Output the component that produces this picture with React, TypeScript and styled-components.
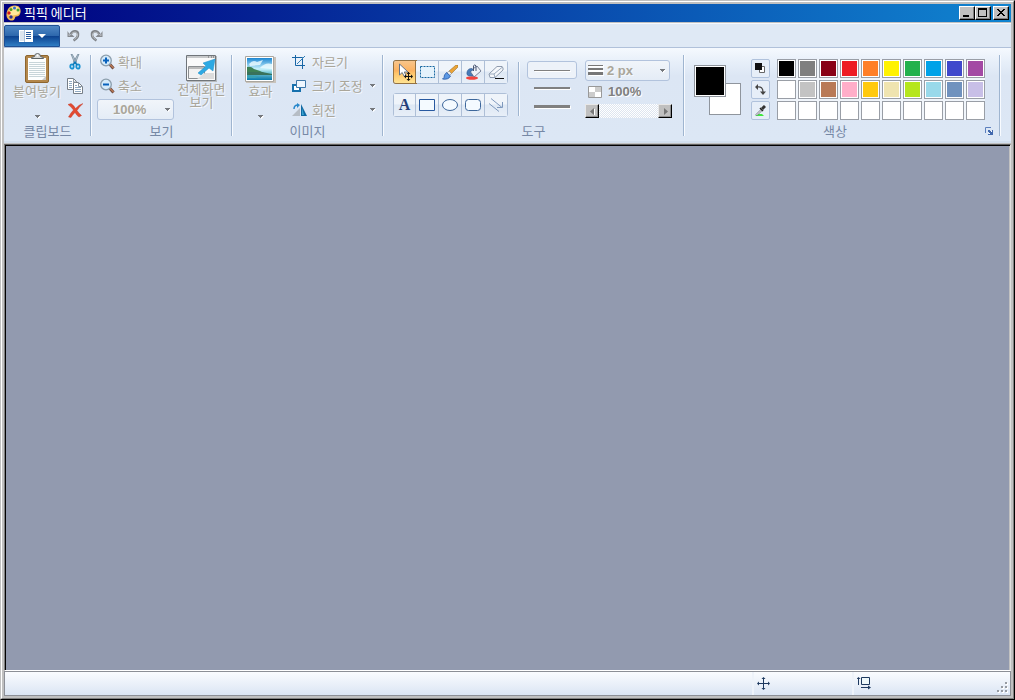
import React from "react";
import styled, { createGlobalStyle, css } from "styled-components";

const Global = createGlobalStyle`
  * { box-sizing: border-box; }
  body { margin: 0; font-family: "Noto Sans CJK KR", sans-serif; font-size: 13px; line-height: 16px; background: #c0c0c0; }
  button, select, input { font: inherit; margin: 0; padding: 0; border: 0; background: none; border-radius: 0; color: inherit; }
  svg { display: block; flex: none; }
`;

const OuterFrame = styled.div`
  min-height: 100vh;
  display: flex;
  border: 1px solid;
  border-color: #c0c0c0 #000 #000 #c0c0c0;
`;
const Frame = styled.div`
  flex: 1;
  min-width: 0;
  display: flex;
  flex-direction: column;
  padding: 2px;
  background: #c0c0c0;
  border: 1px solid;
  border-color: #fff #808080 #808080 #fff;
`;

const TitleBar = styled.header`
  height: 18px;
  display: flex;
  align-items: center;
  gap: 3px;
  padding: 0 2px;
  background: linear-gradient(90deg, #000080, #1084d0);
  color: #fff;
`;
const Title = styled.h1`
  flex: 1;
  margin: 0;
  font-size: 13px;
  line-height: 16px;
  font-weight: 400;
`;
const WindowButtons = styled.div`
  display: flex;
`;
const WindowButton = styled.button<{ $apart?: boolean }>`
  width: 16px;
  height: 14px;
  margin-left: ${(p) => (p.$apart ? 2 : 0)}px;
  background: #c0c0c0;
  border: 1px solid;
  border-color: #fff #000 #000 #fff;
  box-shadow: inset -1px -1px #808080;
`;

const QuickBar = styled.nav`
  height: 25px;
  margin-top: 1px;
  display: flex;
  align-items: center;
  gap: 7px;
  background: #dfe9f5;
  border-top: 1px solid #f6f9fd;
  border-bottom: 1px solid #b0c1da;
`;
const AppMenu = styled.button`
  width: 56px;
  height: 22px;
  display: flex;
  align-items: center;
  justify-content: center;
  gap: 5px;
  border: 1px solid #1e4f94;
  border-radius: 2px 2px 0 0;
  background: linear-gradient(#4f87c4, #2e68ad 48%, #0d4390 52%, #2f7dc3);
`;
const QuickButton = styled.button`
  width: 16px;
  height: 14px;
`;

const Ribbon = styled.section`
  height: 95px;
  display: flex;
  padding: 0 1px;
  background: linear-gradient(#f5f9fe, #e7eff9 14px, #dce6f4 28px, #dce7f5);
  border-bottom: 2px solid #d2dfee;
`;
const Group = styled.section<{ $width: number }>`
  width: ${(p) => p.$width}px;
  flex: none;
  display: flex;
  flex-direction: column;
  padding-top: 4px;
`;
const GroupContent = styled.div<{ $left?: number; $gap?: number }>`
  height: 71px;
  display: flex;
  align-items: flex-start;
  padding-left: ${(p) => p.$left ?? 0}px;
  gap: ${(p) => p.$gap ?? 0}px;
`;
const GroupLabel = styled.h2`
  margin: 0;
  font-size: 13px;
  font-weight: 400;
  line-height: 16px;
  text-align: center;
  color: #7688a5;
`;
const LabelRow = styled.div`
  display: grid;
  grid-template-columns: 1fr 14px;
  align-items: center;
`;
const Separator = styled.div<{ $inner?: boolean }>`
  width: 2px;
  flex: none;
  border-left: 1px solid #9fb5d0;
  background: #f8fbff;
  margin: ${(p) => (p.$inner ? "10px 7px 0 10px" : "7px 0 5px")};
  ${(p) => p.$inner && "height: 54px;"}
`;

const dimText = css`
  color: #aaa69a;
  text-shadow: 1px 1px #f4f8fd;
`;
const LargeButton = styled.button<{ $width: number; $top?: number }>`
  ${dimText}
  width: ${(p) => p.$width}px;
  height: 70px;
  padding-top: ${(p) => p.$top ?? 0}px;
  display: flex;
  flex-direction: column;
  align-items: center;
  line-height: 13px;
  white-space: nowrap;
`;
const LargeArrow = styled.i`
  margin: auto 0 3px;
`;
const SmallColumn = styled.div`
  display: flex;
  flex-direction: column;
  gap: 8px;
  padding-top: 2px;
`;
const IconButton = styled.button`
  width: 16px;
  height: 16px;
  display: grid;
  place-items: center;
`;
const RowButton = styled.button<{ $width?: number }>`
  ${dimText}
  width: ${(p) => (p.$width ? p.$width + "px" : "auto")};
  height: 16px;
  display: flex;
  align-items: center;
  gap: ${(p) => (p.$width ? 5 : 3)}px;
  text-align: left;
  white-space: nowrap;
  span { flex: 1; }
`;
const Combo = styled.label<{ $width: number }>`
  ${dimText}
  width: ${(p) => p.$width}px;
  height: 21px;
  display: flex;
  align-items: center;
  padding: 0 3px 0 2px;
  gap: 3px;
  border: 1px solid #b2c3dd;
  border-radius: 3px;
  background: linear-gradient(#f1f5fa, #e4ecf6);
  font-family: "Liberation Sans", sans-serif;
  font-weight: 700;
  select {
    flex: 1;
    min-width: 0;
    appearance: none;
    outline: 0;
    text-shadow: inherit;
  }
`;
const ZoomCombo = styled(Combo)`
  margin: -3px 0 0 -3px;
  padding: 0 2px 0 15px;
`;

const ToolGrid = styled.div`
  display: flex;
  flex-direction: column;
  gap: 9px;
  padding-top: 8px;
`;
const ToolStrip = styled.div`
  display: flex;
  height: 24px;
  border: 1px solid #aebfd7;
  border-radius: 3px;
`;
const Tool = styled.button<{ $active?: boolean }>`
  width: 23px;
  height: 22px;
  display: grid;
  place-items: center;
  background: linear-gradient(#eff4fa 45%, #dee8f4 50%, #e8eff8);
  border-right: 1px solid #aebfd7;
  &:first-child { width: 22px; }
  &:last-child { width: 22px; border-right: 0; }
  ${(p) =>
    p.$active &&
    css`
      background: linear-gradient(#f8c58b, #fcb260 45%, #ffc46a 55%, #ffe391);
      box-shadow: 0 0 0 1px #947242;
      border-right-color: #947242;
      border-radius: 2px 0 0 2px;
    `}
`;
const StrokeColumn = styled.div`
  width: 50px;
  display: flex;
  flex-direction: column;
  padding-top: 9px;
`;
const StrokeButton = styled.button<{ $weight: number; $active?: boolean }>`
  height: 18px;
  display: grid;
  place-items: center;
  border: 1px solid ${(p) => (p.$active ? "#b2c3dd" : "transparent")};
  background: ${(p) => (p.$active ? "#edf2f9" : "transparent")};
  border-radius: 3px;
  &::after {
    content: "";
    width: 36px;
    height: ${(p) => p.$weight}px;
    background: #808080;
    box-shadow: 1px 1px #fff;
  }
`;
const SizeColumn = styled.div`
  width: 87px;
  margin-left: 8px;
  padding-top: 8px;
`;
const Opacity = styled.label`
  display: flex;
  align-items: center;
  gap: 6px;
  height: 16px;
  margin: 3px 0 4px;
  padding-left: 3px;
  color: #7f7f7f;
  font-family: "Liberation Sans", sans-serif;
  font-weight: 700;
  text-shadow: 1px 1px #fff;
`;
const ScrollTrack = styled.div`
  height: 14px;
  display: flex;
`;
const ScrollButton = styled.button`
  width: 14px;
  height: 14px;
  display: grid;
  place-items: center;
  background: #c0c0c0;
  border: 1px solid;
  border-color: #e8e8e8 #000 #000 #e8e8e8;
  box-shadow: inset -1px -1px #909090;
`;
const ScrollRange = styled.input`
  flex: 1;
  min-width: 0;
  height: 14px;
  appearance: none;
  background: repeating-conic-gradient(#fff 0 25%, #dde5f0 0 50%) 0 0 / 2px 2px;
  &::-webkit-slider-thumb { appearance: none; width: 1px; height: 1px; }
`;

const CurrentColors = styled.div`
  width: 48px;
  height: 50px;
  margin-top: 13px;
  display: grid;
  grid-template: 18px 14px 18px / 15px 17px 15px;
`;
const CurrentColor = styled.button<{ $color: string; $back?: boolean }>`
  grid-area: ${(p) => (p.$back ? "2 / 2 / 4 / 4" : "1 / 1 / 3 / 3")};
  z-index: ${(p) => (p.$back ? 0 : 1)};
  border: 1px solid #8f959d;
  background: ${(p) => p.$color};
  box-shadow: inset 0 0 0 1px #fff;
`;
const ColorTools = styled.div`
  display: flex;
  flex-direction: column;
  gap: 2px;
  margin: 7px 7px 0 9px;
`;
const ColorTool = styled.button`
  width: 19px;
  height: 19px;
  display: grid;
  place-items: center;
  background: #e6eef8;
  border: 1px solid #b0c2dc;
  border-radius: 2px;
`;
const Palette = styled.div`
  display: grid;
  grid-template-columns: repeat(10, 19px);
  gap: 2px;
  margin-top: 7px;
  background: #f0f5fb;
`;
const Swatch = styled.button<{ $color: string }>`
  height: 19px;
  background: ${(p) => p.$color};
  border: 1px solid #999ea6;
  box-shadow: inset 0 0 0 1px #fff;
`;

const Workspace = styled.main`
  flex: 1;
  margin-top: 1px;
  background: #929aaf;
  border: 1px solid;
  border-color: #606060 #dfdfdf #fff #808080;
  box-shadow: inset 1px 1px #000, inset -1px 0 #c0c0c0;
`;
const StatusBar = styled.footer`
  height: 25px;
  display: flex;
  border: 1px solid #8c8f96;
  background: linear-gradient(#fafcff, #dbe5f3);
`;
const StatusCell = styled.div<{ $width?: number }>`
  ${(p) => (p.$width ? `width: ${p.$width}px; border-left: 2px solid #eef3fa;` : "flex: 1;")}
  padding: 5px 3px 0;
`;
const Grip = styled.div`
  display: flex;
  align-items: flex-end;
  padding: 0 2px 2px 0;
`;

const Arrow = () => (
  <svg width="7" height="4" aria-hidden="true"><path d="M2 1h5L4.5 4z" fill="#fff" /><path d="M1 0h5v1H5v1H4v1H3V2H2V1H1z" fill="#75787d" /></svg>
);
const PaletteLogo = () => (
  <svg width="15" height="16" viewBox="0 0 15 16">
    <path d="M8 .5C13 0 15 3 14.6 7c-.5 3-2 4.500-4.600 4.500-1 .2-.8 1.500-1.500 2.500C7.500 16 4 16 2 14c-2-2-2-6-.5-9S5 1 8 .5z" fill="#efb955" />
    <path d="M8 1.500C12.500 1 14 3.500 13.600 7c-.5 2-2 3-4 3-3 .5-5 1-7 .5C2 6 3 2.500 8 1.500z" fill="#ffe79b" />
    <circle cx="5" cy="4.500" r="1.500" fill="#4e9a20" /><circle cx="8.500" cy="3" r="1.500" fill="#2a6fc9" /><circle cx="12" cy="5" r="1.500" fill="#40a535" /><circle cx="3" cy="8" r="1.700" fill="#d71d17" /><circle cx="5" cy="12" r="1.700" fill="#30308e" />
  </svg>
);
const Undo = ({ flip = false }: { flip?: boolean }) => (
  <svg width="13" height="13" viewBox="0 0 13 13"><g transform={flip ? "translate(13 0) scale(-1 1)" : undefined}>
    <path d="M3.500 5.500C6 .5 11.500 1.500 11 6c0 3-2 4-4.500 5.500" fill="none" stroke="#7f8388" strokeWidth="2.500" />
    <path d="M4 5.500C6.500 2 10.500 2.500 10.500 6c0 2-1 3-3 4.500" fill="none" stroke="#bcc0c3" />
    <path d="M.5 2v6h7l-2-2H3z" fill="#85898e" /><path d="M1.500 4.500v2.500h2z" fill="#b6b9bd" />
  </g></svg>
);
const Clipboard = () => (
  <svg width="25" height="31" viewBox="0 0 25 31">
    <rect x=".5" y="2.500" width="23" height="27" rx="1.500" fill="#b3874b" stroke="#8d652f" />
    <path d="M3 5h18v22H3z" fill="#fdfefe" /><path d="M4 9.500h16M4 11.500h16M4 13.500h16M4 15.500h16M4 17.500h16M4 19.500h16M4 21.500h16M4 23.500h16" stroke="#c8d5d9" />
    <path d="M6.500 5.500v-1l3-1q0-3 3-3t3 3l3 1v1z" fill="#d7d9d9" stroke="#5e6467" /><circle cx="12.500" cy="2.500" r="1" fill="#fff" />
    <path d="M17 27l4-4v4z" fill="#c9c9c9" />
  </svg>
);
const Scissors = () => (
  <svg width="12" height="16" viewBox="0 0 12 16"><path d="M2 0l1 0 4.500 8-1.500 2zM10 0H9L4.500 8 6 10z" fill="#bdcbd5" stroke="#677f92" strokeWidth=".7" />
    <ellipse cx="3" cy="12.500" rx="1.700" ry="2.200" fill="none" stroke="#1791d1" strokeWidth="1.800" /><ellipse cx="9" cy="12.500" rx="1.700" ry="2.200" fill="none" stroke="#1791d1" strokeWidth="1.800" /><path d="M4 11l2-3 2 3" stroke="#0b79ba" strokeWidth="1.500" fill="none" /></svg>
);
const Copy = () => (
  <svg width="16" height="17" viewBox="0 0 16 17"><g fill="#fff" stroke="#777f88"><path d="M.5.500h6l3 3v8h-9z" /><path d="M6.500 4.500h5l4 4v7h-9z" /></g>
    <path d="M11.500 5v3.500H15M6.500 1v3H9" fill="none" stroke="#8d98a3" /><path d="M2 3.500h3M2 5.500h3M2 7.500h3M2 9.500h3M8 7.500h2M8 9.500h6M8 11.500h6M8 13.500h6" stroke="#8fa9c2" /></svg>
);
const Delete = () => (
  <svg width="15" height="15" viewBox="0 0 15 15"><path d="M0 1.500L3 .5q2.500 1.500 4.500 5Q11 1.500 15 .5 11 4 9 7.500q2 3 4.500 5L11 14q-2-1-4-4.500-3 3-4 5L.5 14Q2.500 10 5.500 7 3 3.500 0 1.500z" fill="#e24a31" stroke="#bd2d1b" strokeWidth=".4" /></svg>
);
const Magnifier = ({ plus = false }: { plus?: boolean }) => (
  <svg width="15" height="16" viewBox="0 0 15 16"><path d="M10 10.500l3.500 4" stroke="#6b4b42" strokeWidth="3" /><path d="M9.500 10l4 4" stroke="#bd7a55" strokeWidth="1.500" />
    <circle cx="6" cy="6.500" r="5.300" fill="#d4eafa" stroke="#8b9dab" strokeWidth="1.300" /><path d={plus ? "M3 6.500h6M6 3.500v6" : "M3 6.500h6"} stroke="#0862bd" strokeWidth="2" /></svg>
);
const FullScreen = () => (
  <svg width="31" height="27" viewBox="0 0 31 27"><path d="M1 1h30v26H1z" fill="#b7babc" /><path d="M.5.500h29v25H.5z" fill="#fafafa" stroke="#70757a" /><path d="M1 1h28v2H1z" fill="#c7c9cb" /><path d="M22 2h1M25 2h1M27 2h1" stroke="#666" />
    <path d="M2.500 11.500h16v12h-16z" fill="#f2f2f2" stroke="#8b8e91" /><path d="M3 13h15" stroke="#bbb" strokeWidth="2" /><path d="M11 24l8-6h9v6z" fill="#dcdcdc" />
    <path d="M12 18l8-7-3-3 12-4-2 12-4-3-8 7z" fill="#2da9e3" stroke="#1d8dc8" strokeWidth=".5" /></svg>
);
const Landscape = () => (
  <svg width="31" height="28" viewBox="0 0 31 28"><defs><linearGradient id="sky" x2="0" y2="1"><stop stopColor="#1c86d2" /><stop offset=".5" stopColor="#c8f2fb" /><stop offset=".66" stopColor="#79c9d8" /><stop offset="1" stopColor="#0878aa" /></linearGradient></defs>
    <path d="M1 1h30v26H1z" fill="#c9c3bb" /><path d="M.5.500h28v25H.5z" fill="#fff" stroke="#aaa69f" /><path d="M2 2h25v22H2z" fill="url(#sky)" /><path d="M4 8q4-5 8-2l6-2-3 5-10 1zM15 12q5-6 12-4v5z" fill="#effcff" opacity=".8" /><path d="M2 11q4-1 7 2l6 2 4 2H2z" fill="#3d8055" /><path d="M2 16h15l10 2v1H2z" fill="#39725c" /><path d="M2 19l13 1-5 2H2z" fill="#38a1b4" /></svg>
);
const Crop = () => (
  <svg width="15" height="14" viewBox="0 0 15 14"><path d="M3.500 0v10.500H13M0 2.500h10.500V14" fill="none" stroke="#1765a5" /><path d="M5 9l8-8" stroke="#337fb5" /></svg>
);
const Resize = () => (
  <svg width="15" height="14" viewBox="0 0 15 14"><path d="M1 6h7v6H1z" fill="#fff" stroke="#1670ad" strokeWidth="2" /><path d="M4.500 1.500h9v7h-9z" fill="#eff7ff" stroke="#3e78a9" /></svg>
);
const Rotate = () => (
  <svg width="15" height="14" viewBox="0 0 15 14"><path d="M0 13L8 5v8z" fill="#b6bdc5" /><path d="M9 1v12h6z" fill="#106aa3" /><path d="M10 5v7h2z" fill="#39a3cf" /><path d="M2 6q0-4 4-4" stroke="#2888cb" strokeWidth="1.500" fill="none" /><path d="M5 0l3 2-3 3z" fill="#2888cb" /></svg>
);
const StrokeLines = () => <svg width="16" height="11"><path d="M1 1.500h15M1 6h15M1 11h15" stroke="#fff" strokeWidth="2" /><path d="M0 .5h15" stroke="#777" /><path d="M0 4h15" stroke="#777" strokeWidth="2" /><path d="M0 8.500h15" stroke="#777" strokeWidth="3" /></svg>;

const tools: [string, React.ReactNode][] = [
  ["선택", <svg width="18" height="18" viewBox="0 0 18 18"><path d="M3.500 1v11l2.700-2.500 2 4 2-1-2-3.500H12z" fill="#fff" stroke="#657489" /><path d="M12.500 9v8M9 13.500h7" stroke="#111" /><path d="M12.500 9l2 2h-4zM12.500 18l2-2h-4zM8 13.500l2-2v4zM17 13.500l-2-2v4z" fill="#111" /></svg>],
  ["영역", <svg width="15" height="12"><path d="M.5.500h14v11H.5z" fill="#e4f2fc" stroke="#1667a0" strokeDasharray="2 1" /></svg>],
  ["붓", <svg width="16" height="15" viewBox="0 0 16 15"><path d="M14 0L7 6l2.500 2.500L16 2V0z" fill="#eaa337" stroke="#8c641e" strokeWidth=".5" /><path d="M7 6l2.500 2.500-2 2L5 8z" fill="#eee" stroke="#777" strokeWidth=".5" /><path d="M4.500 7.500l4 3.500q-2 4-8 3 2-1 2-4z" fill="#5b98e4" stroke="#2457a4" strokeWidth=".8" /></svg>],
  ["채우기", <svg width="17" height="16" viewBox="0 0 17 16"><ellipse cx="7" cy="14" rx="6" ry="1.700" fill="#f4433d" /><path d="M5 7l7-5 4 5-7 6z" fill="#eef1f7" stroke="#59657f" strokeWidth=".8" /><path d="M8.500 7V2q1-2.500 2.500 0v5" fill="none" stroke="#4c5874" /><path d="M2 8q1-4 5-3.500L8 6 5 8l3 4-4 0q-3-1-2-4z" fill="#487bb8" stroke="#30558a" strokeWidth=".5" /></svg>],
  ["지우개", <svg width="16" height="15" viewBox="0 0 16 15"><path d="M1 9l8-7.500h5l1 1.500v2l-8 7.500H2z" fill="#f6f8fb" stroke="#75849a" strokeWidth=".8" /><path d="M1 9h5l8.500-7M6 9l1 3.500" fill="none" stroke="#9baabd" /><path d="M7 13.500h9" stroke="#111" /></svg>],
];
const LetterIcon = styled.span`
  font: 700 16px/18px "Liberation Serif", serif;
  color: #253f79;
`;
const shapes: [string, React.ReactNode][] = [
  ["텍스트", <LetterIcon>A</LetterIcon>],
  ["사각형", <svg width="16" height="12"><path d="M.5.500h15v11H.5z" fill="#f4faff" stroke="#2859a0" /></svg>],
  ["타원", <svg width="16" height="14"><ellipse cx="8" cy="7" rx="7.500" ry="5.500" fill="#f4faff" stroke="#3d679b" /></svg>],
  ["둥근 사각형", <svg width="16" height="12"><rect x=".5" y=".5" width="15" height="11" rx="3" fill="#f4faff" stroke="#3d679b" /></svg>],
  ["화살표", <svg width="16" height="14" viewBox="0 0 16 14"><path d="M1 5.500l10 8M3 .5l11 9M14.500 4v5.500H9" fill="none" stroke="#7f99bd" /></svg>],
];

const colors = [
  "#000000", "#7f7f7f", "#880015", "#ed1c24", "#ff7f27", "#fff200", "#22b14c", "#00a2e8", "#3f48cc", "#a349a4",
  "#ffffff", "#c3c3c3", "#b97a57", "#ffaec9", "#ffc90e", "#efe4b0", "#b5e61d", "#99d9ea", "#7092be", "#c8bfe7",
  ...Array(10).fill("#ffffff"),
];

export default function App() {
  return (
    <OuterFrame>
      <Global />
      <Frame>
        <TitleBar>
          <PaletteLogo />
          <Title>픽픽 에디터</Title>
          <WindowButtons>
            <WindowButton aria-label="최소화"><svg width="14" height="12"><path d="M3 8h6v2H3z" /></svg></WindowButton>
            <WindowButton aria-label="최대화"><svg width="14" height="12"><path d="M2 1h9v9H2zm1 2v6h7V3z" fillRule="evenodd" /></svg></WindowButton>
            <WindowButton $apart aria-label="닫기"><svg width="14" height="12"><path d="M3 2h2v1h1v1h2V3h1V2h2v1h-1v1H9v1H8v1h1v1h1v1h1v1H9V8H8V7H6v1H5v1H3V8h1V7h1V6h1V5H5V4H4V3H3z" /></svg></WindowButton>
          </WindowButtons>
        </TitleBar>

        <QuickBar>
          <AppMenu aria-label="파일">
            <svg width="14" height="12"><path d="M0 0h14v12H0z" fill="#fff" /><path d="M1 1h4v10H1z" fill="#dce5ef" /><path d="M7 2.500h5M7 4.500h5M7 6.500h5M7 8.500h5" stroke="#285b9e" /><path d="M5.500 0v12" stroke="#a9bfdb" /></svg>
            <svg width="8" height="4"><path d="M0 0h8L4 4z" fill="#fff" /></svg>
          </AppMenu>
          <QuickButton aria-label="실행 취소"><Undo /></QuickButton>
          <QuickButton aria-label="다시 실행"><Undo flip /></QuickButton>
        </QuickBar>

        <Ribbon>
          <Group $width={85}>
            <GroupContent $left={8} $gap={6}>
              <LargeButton $width={48} $top={1}><Clipboard /><span>붙여넣기</span><LargeArrow><Arrow /></LargeArrow></LargeButton>
              <SmallColumn>
                <IconButton aria-label="잘라내기"><Scissors /></IconButton>
                <IconButton aria-label="복사"><Copy /></IconButton>
                <IconButton aria-label="삭제"><Delete /></IconButton>
              </SmallColumn>
            </GroupContent>
            <GroupLabel>클립보드</GroupLabel>
          </Group>
          <Separator />

          <Group $width={139}>
            <GroupContent $left={8} $gap={4}>
              <SmallColumn>
                <RowButton><Magnifier plus /><span>확대</span></RowButton>
                <RowButton><Magnifier /><span>축소</span></RowButton>
                <ZoomCombo $width={77}>
                  <select aria-label="배율"><option>100%</option></select><Arrow />
                </ZoomCombo>
              </SmallColumn>
              <LargeButton $width={47} $top={3}><FullScreen /><span>전체화면<br />보기</span></LargeButton>
            </GroupContent>
            <GroupLabel>보기</GroupLabel>
          </Group>
          <Separator />

          <Group $width={149}>
            <GroupContent $left={12} $gap={16}>
              <LargeButton $width={31} $top={4}><Landscape /><span>효과</span><LargeArrow><Arrow /></LargeArrow></LargeButton>
              <SmallColumn>
                <RowButton $width={84}><Crop /><span>자르기</span></RowButton>
                <RowButton $width={84}><Resize /><span>크기 조정</span><Arrow /></RowButton>
                <RowButton $width={84}><Rotate /><span>회전</span><Arrow /></RowButton>
              </SmallColumn>
            </GroupContent>
            <GroupLabel>이미지</GroupLabel>
          </Group>
          <Separator />

          <Group $width={299}>
            <GroupContent $left={9}>
              <ToolGrid>
                <ToolStrip>{tools.map(([name, icon], i) => <Tool key={name} aria-label={name} $active={i === 0}>{icon}</Tool>)}</ToolStrip>
                <ToolStrip>{shapes.map(([name, icon]) => <Tool key={name} aria-label={name}>{icon}</Tool>)}</ToolStrip>
              </ToolGrid>
              <Separator $inner />
              <StrokeColumn>
                <StrokeButton $weight={1} $active aria-label="가는 선" />
                <StrokeButton $weight={2} aria-label="중간 선" />
                <StrokeButton $weight={3} aria-label="굵은 선" />
              </StrokeColumn>
              <SizeColumn>
                <Combo $width={85}><StrokeLines /><select aria-label="선 굵기"><option>2 px</option></select><Arrow /></Combo>
                <Opacity htmlFor="opacity">
                  <svg width="14" height="12"><path d="M.5.500h13v11H.5z" fill="#fff" stroke="#999" /><path d="M7 1h6v5H7zM1 6h6v5H1z" fill="#ccc" /></svg>
                  100%
                </Opacity>
                <ScrollTrack>
                  <ScrollButton aria-label="감소"><svg width="5" height="7"><path d="M4 0v7L0 3.500z" fill="#777" /><path d="M4.500 1v6" stroke="#fff" /></svg></ScrollButton>
                  <ScrollRange id="opacity" type="range" defaultValue={100} />
                  <ScrollButton aria-label="증가"><svg width="5" height="7"><path d="M1 0v7l4-3.500z" fill="#777" /></svg></ScrollButton>
                </ScrollTrack>
              </SizeColumn>
            </GroupContent>
            <GroupLabel>도구</GroupLabel>
          </Group>
          <Separator />

          <Group $width={314}>
            <GroupContent $left={9}>
              <CurrentColors>
                <CurrentColor $color="#000" aria-label="전경색" />
                <CurrentColor $color="#fff" $back aria-label="배경색" />
              </CurrentColors>
              <ColorTools>
                <ColorTool aria-label="기본 색상"><svg width="11" height="11"><path d="M4.500 3.500h5v6h-5z" fill="#fff" stroke="#666" /><path d="M0 0h7v7H0z" fill="#111" /></svg></ColorTool>
                <ColorTool aria-label="색상 교환"><svg width="11" height="11" viewBox="0 0 11 11"><path d="M2 3q6-1 6 5" fill="none" stroke="#444" strokeWidth="1.200" /><path d="M0 3l3-3v6zM5 7.500h6l-3 3.500z" fill="#444" /></svg></ColorTool>
                <ColorTool aria-label="색 추출"><svg width="11" height="12" viewBox="0 0 11 12"><path d="M0 11l3-2h4l2 2z" fill="#40e840" /><path d="M1 9.500l5-5 1 1-5 5z" fill="#fff" stroke="#556" strokeWidth=".8" /><path d="M5 3l3 3" stroke="#222" strokeWidth="1.500" /><path d="M7 4l3-3" stroke="#333" strokeWidth="3" /></svg></ColorTool>
              </ColorTools>
              <Palette>{colors.map((c, i) => <Swatch key={i} $color={c} aria-label={`색상 ${i + 1}`} />)}</Palette>
            </GroupContent>
            <LabelRow>
              <GroupLabel>색상</GroupLabel>
              <button aria-label="색상 옵션"><svg width="9" height="9"><path d="M.5 6V.500H6" fill="none" stroke="#5c7fbd" /><path d="M4 4h4v4H4z" fill="#fff" /><path d="M3 3h2v1h1v1h1V3h1v5H3V7h2V6H4V5H3z" fill="#4269ae" /></svg></button>
            </LabelRow>
          </Group>
          <Separator />
        </Ribbon>

        <Workspace aria-label="캔버스" />

        <StatusBar>
          <StatusCell />
          <StatusCell $width={100}><svg width="13" height="13" viewBox="0 0 13 13"><path d="M6.500 1v11M1 6.500h11" stroke="#1d395f" /><path d="M6.500 0l2 2h-4zM6.500 13l2-2h-4zM0 6.500l2-2v4zM13 6.500l-2-2v4z" fill="#1d395f" /></svg></StatusCell>
          <StatusCell $width={145}><svg width="14" height="13" viewBox="0 0 14 13"><path d="M4.500.500h8v7h-8z" fill="#eef8fa" stroke="#1d395f" /><path d="M1.500 1v7M4 10.500h8" stroke="#1d395f" /><path d="M1.500 0l2 2h-4zM14 10.500l-3-2v4z" fill="#1d395f" /></svg></StatusCell>
          <Grip><svg width="11" height="11"><path d="M9 1h2v2H9zM5 5h2v2H5zM9 5h2v2H9zM1 9h2v2H1zM5 9h2v2H5zM9 9h2v2H9z" fill="#fff" /><path d="M8 0h2v2H8zM4 4h2v2H4zM8 4h2v2H8zM0 8h2v2H0zM4 8h2v2H4zM8 8h2v2H8z" fill="#969ba2" /></svg></Grip>
        </StatusBar>
      </Frame>
    </OuterFrame>
  );
}
